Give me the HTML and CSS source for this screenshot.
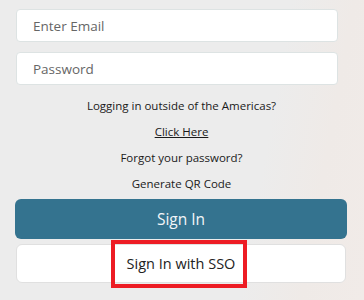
FILE: index.html
```html
<!DOCTYPE html>
<html>
<head>
<meta charset="utf-8">
<link rel="stylesheet" href="styles.css">
</head>
<body>
<main class="login">
  <input class="field" type="text" placeholder="Enter Email">
  <input class="field" type="password" placeholder="Password">
  <div class="links">
    <p class="line">Logging in outside of the Americas?</p>
    <a class="line link" href="#">Click Here</a>
    <p class="line">Forgot your password?</p>
    <p class="line">Generate QR Code</p>
  </div>
  <button class="btn primary">Sign In</button>
  <button class="btn secondary"><span class="highlight">Sign In with SSO</span></button>
</main>
</body>
</html>
```
FILE: styles.css
```css
html, body {
  margin: 0;
  padding: 0;
  width: 364px;
  height: 300px;
  overflow: hidden;
}
body {
  background: linear-gradient(100deg, #ececec 0%, #ececec 70%, #efeae7 85%, #f1ebe8 100%);
  font-family: "Open Sans", "Noto Sans", sans-serif;
  color: #222;
}
.login {
  display: flex;
  flex-direction: column;
  padding: 9px 17px 0 15px;
}
.field {
  box-sizing: border-box;
  height: 33px;
  margin: 0 9px 10px 1px;
  padding: 0 16px;
  border: 1px solid #dde3e3;
  border-radius: 4px;
  background: #fff;
  font-family: inherit;
  font-size: 13.5px;
  color: #333;
  outline: none;
}
.field::placeholder { color: #666; }
.links {
  display: flex;
  flex-direction: column;
  align-items: center;
  margin-top: -2px;
  margin-left: 1px;
}
.line {
  margin: 0;
  height: 26px;
  line-height: 26px;
  font-size: 11.5px;
  color: #1a1a1a;
}
.link { text-decoration: underline; color: #1a1a1a; }
.btn {
  box-sizing: border-box;
  font-family: inherit;
  border-radius: 6px;
  cursor: pointer;
}
.primary {
  margin-top: 2px;
  height: 40px;
  background: #34738f;
  border: none;
  color: #f2f6f8;
  font-size: 15.5px;
}
.secondary {
  margin: 5px 1px 0 1px;
  height: 39px;
  background: #fff;
  border: 1px solid #e0e0e0;
  color: #222;
  font-size: 14.5px;
  display: flex;
  justify-content: center;
  align-items: center;
  padding: 0;
  position: relative;
}
.highlight {
  position: relative;
  padding: 0 1px;
}
.highlight::after {
  content: "";
  position: absolute;
  left: -15px;
  right: -11px;
  top: -14px;
  bottom: -15px;
  border: 4px solid #ed1c24;
}
```
